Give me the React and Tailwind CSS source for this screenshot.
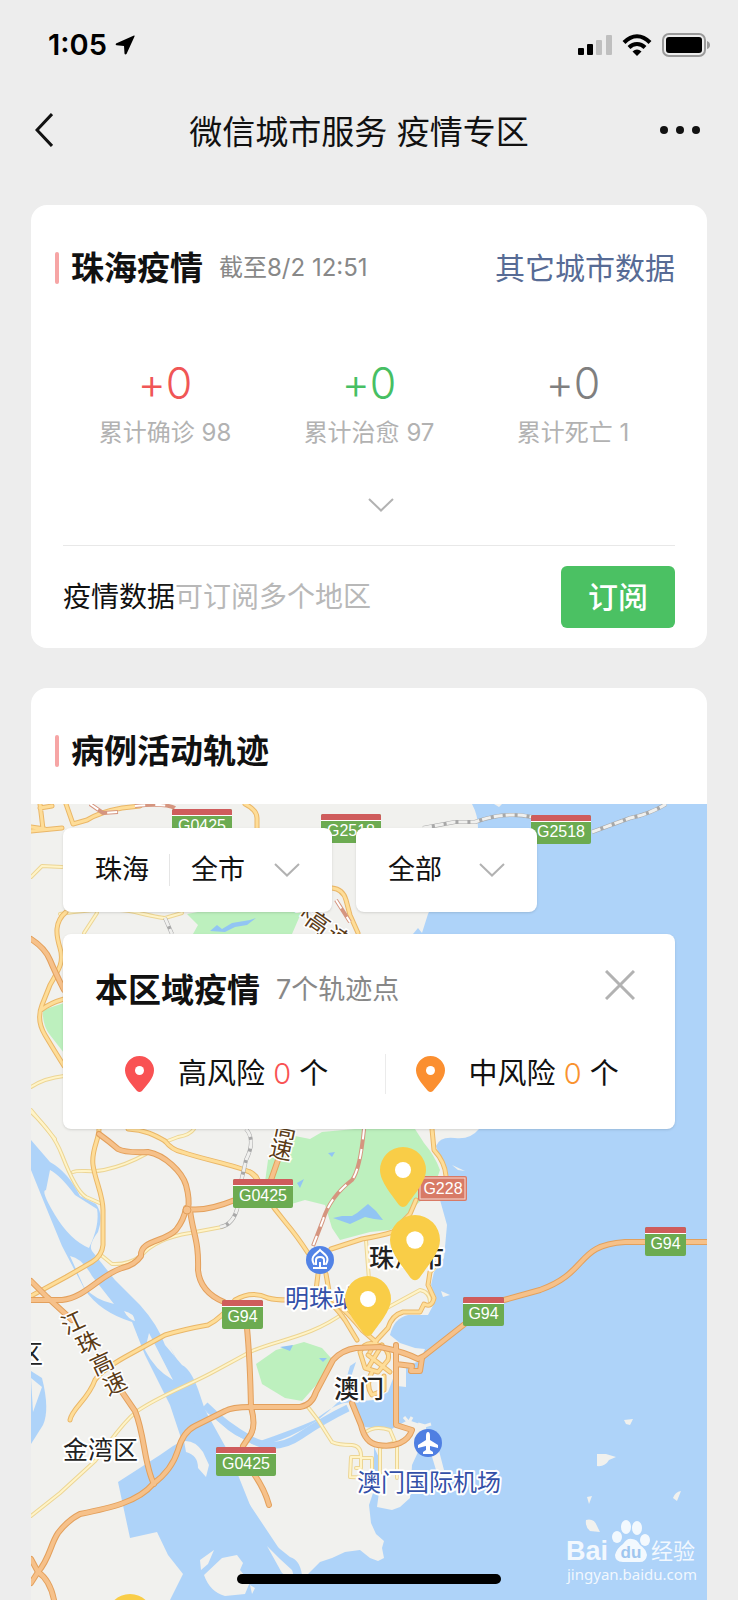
import React, { useState } from 'react'

const FONT = "font-['Inter','Noto_Sans_CJK_SC',sans-serif]"

const stats = [
    { label: '累计确诊', added: '+0', total: 98, color: 'text-[#f05656]' },
    { label: '累计治愈', added: '+0', total: 97, color: 'text-[#47bf63]' },
    { label: '累计死亡', added: '+0', total: 1, color: 'text-[#7f7f7f]' },
]

const risks = [
    { label: '高风险', count: 0, pin: '#f95253', color: 'text-[#f95253]' },
    { label: '中风险', count: 0, pin: '#fb8f30', color: 'text-[#f9922f]' },
]

const badges = [
    { x: 172, y: 809, w: 60, text: 'G0425' },
    { x: 321, y: 814, w: 60, text: 'G2518' },
    { x: 531, y: 815, w: 60, text: 'G2518' },
    { x: 233, y: 1179, w: 60, text: 'G0425' },
    { x: 222, y: 1300, w: 41, text: 'G94' },
    { x: 463, y: 1297, w: 41, text: 'G94' },
    { x: 645, y: 1227, w: 41, text: 'G94' },
    { x: 216, y: 1447, w: 60, text: 'G0425' },
]

// roads, from the smallest to the motorways
const lanes = [
    'M31 1112C45 1125 55 1137 62 1155S78 1192 86 1197L102 1204',
    'M73 1172C80 1169 90 1173 104 1170S130 1163 146 1154',
    'M165 1142L178 1137Q190 1135 194 1129',
    'M101 1255L112 1264Q128 1265 141 1256C150 1245 165 1237 190 1233L222 1227',
    'M31 1516L60 1493L95 1461C112 1440 120 1425 136 1412C160 1395 190 1385 215 1371L250 1352C275 1340 310 1338 345 1312',
    'M308 1407L318 1420L332 1442Q338 1445 352 1445Q362 1446 361 1458L372 1458V1478L350 1477L351 1457H361V1468H356',
    'M31 877L42 866L62 867',
    'M31 1087Q45 1078 64 1076',
    'M31 1110L55 1139',
    'M60 914Q110 906 135 912T165 918L182 913M97 913L84 933',
    'M366 1240L369 1280',
    'M385 1309L420 1290Q430 1292 430 1302',
    'M366 1432Q375 1425 390 1430L395 1442L382 1447M380 1447V1478M397 1445V1478',
]

const streets = [
    'M99 1129C99 1140 91 1150 93 1165S103 1195 103 1210V1245Q102 1256 92 1262L66 1277L31 1296',
    'M128 1129C145 1130 155 1135 165 1141Q172 1150 182 1152C205 1160 235 1165 247 1171Q255 1173 258 1180',
    'M70 1420C72 1408 88 1400 95 1380Q102 1370 125 1357L165 1335Q185 1329 208 1325Q222 1318 235 1300Q252 1290 268 1298Q275 1300 288 1300',
    'M250 1172Q258 1178 265 1195Q275 1210 286 1223T308 1253',
    'M331 1249L362 1239Q380 1236 393 1232Q402 1222 410 1214L416 1200',
    'M318 1274L316 1290Q335 1305 345 1320L357 1340',
    'M326 1274L330 1297Q350 1315 362 1330L376 1342',
    'M66 912C54 922 56 935 60 948S60 968 50 985L42 1005Q36 1020 45 1035T64 1066M41 1010Q50 1003 64 999',
    'M31 831L62 828M40 804L43 829M40 808L52 806M66 804L73 824L87 820Q100 812 122 808L140 806M45 829L31 827',
    'M245 804Q257 810 257 818V828',
    'M332 888Q343 889 346 900L350 915L358 933',
    'M432 1129L434 1150Q445 1162 446 1176',
    'M440 1260L430 1272L428 1285L434 1298Q432 1308 424 1304L420 1312L403 1312Q392 1315 388 1328L375 1342L370 1352',
    'M360 1352Q365 1340 378 1345T388 1360L378 1372L365 1368ZM372 1372Q365 1385 372 1395L384 1390V1376M368 1355L390 1372M382 1345L368 1368',
]

const highways = [
    'M31 1300H62C85 1298 100 1275 122 1268Q135 1265 141 1256C140 1240 165 1242 176 1230Q184 1220 186 1208',
    'M99 1134Q110 1142 118 1149Q125 1153 148 1152C165 1155 182 1172 186 1185Q190 1200 188 1209Q205 1212 235 1200',
    'M190 1210C193 1235 199 1240 198 1270Q200 1292 224 1302',
    'M31 1281L47 1297L72 1320M122 1392L135 1411C145 1435 144 1465 154 1484',
    'M38 1572C50 1558 50 1545 58 1533Q68 1520 80 1514C110 1508 138 1502 153 1484Q172 1470 178 1450Q183 1432 195 1426L225 1411Q232 1407 250 1407H300Q312 1405 316 1392L333 1360Q342 1350 356 1348L380 1347Q405 1352 418 1359L424 1356L466 1323',
    'M31 1559L38 1572L31 1583M38 1572Q50 1580 54 1600',
    'M247 1328Q250 1360 251 1407Q256 1425 251 1434L243 1446M254 1474Q265 1490 269 1505',
    'M504 1300L540 1290C590 1272 575 1245 625 1242H707',
    'M31 939Q45 948 50 960T64 990',
    'M352 1403L361 1425Q365 1443 378 1445T400 1443T412 1430L396 1425V1345M396 1364L412 1366L411 1371H420L422 1358',
    'M278 1160L271 1180',
]

const Road = ({ paths, edge, fill, width }) => (
    <g fill="none" strokeLinecap="round" strokeLinejoin="round">
        {paths.map((d) => <path key={d} d={d} stroke={edge} strokeWidth={width} />)}
        {paths.map((d) => <path key={d} d={d} stroke={fill} strokeWidth={width - 2} />)}
    </g>
)

const MapPin = ({ x, y, r }) => (
    <g transform={`translate(${x} ${y}) scale(${r / 23})`}>
        <path d="M-23 0A23 23 0 0 1 23 0C23 12 10 26 4 35Q0 39-4 35C-10 26-23 12-23 0Z" fill="#f9cd47" />
        <circle r="8" fill="#fff" />
    </g>
)

const CityMap = () => (
    <svg className="absolute inset-0 h-full w-full" viewBox="31 804 676 796" preserveAspectRatio="xMidYMin slice" role="img" aria-label="珠海地图">
        <rect x="31" y="804" width="676" height="796" fill="#f1f1ee" />
        {/* water */}
        <g fill="#aed3f9">
            <path d="M472 804Q478 815 478 828L440 890L428 914L422 933L418 928L413 934L420 1129H479Q470 1140 455 1138Q440 1136 436 1146Q440 1160 446 1172L440 1200L447 1225L444 1258L434 1272L431 1285L436 1300L428 1315H408Q394 1318 390 1335L400 1343L415 1348L425 1349L420 1361L406 1366V1387L397 1386L394 1376L388 1392L374 1400L352 1402L350 1380L356 1362L350 1366L346 1380L340 1400Q318 1424 290 1436T252 1444L200 1408L170 1347L178 1362L205 1410L228 1430Q245 1443 260 1441Q292 1430 315 1420Q340 1400 352 1403L365 1427L374 1445V1490L369 1505L371 1523L376 1534L384 1541L382 1548L384 1558L378 1561L370 1558L360 1550L345 1552L332 1558L320 1562L308 1574L302 1575Q300 1560 290 1557L270 1541Q258 1525 250 1505L242 1495L262 1600H707V804Z" />
            <path d="M31 1140L50 1162Q68 1172 80 1196L96 1204Q104 1215 98 1232Q88 1245 92 1251L115 1280L140 1305Q158 1325 165 1345L182 1365Q192 1370 200 1395L205 1410L230 1455L250 1505L280 1550L305 1600H170L183 1574L168 1555L157 1532L130 1538L118 1482L160 1455L173 1446L182 1441L170 1405L145 1355L132 1322Q100 1312 85 1290L62 1246Q45 1205 31 1170Z" />
            <path d="M31 1371L42 1378Q50 1410 43 1425L31 1444Z" />
            <path d="M137 1334L145 1350L162 1373L200 1420L186 1380L160 1340Z" />
        </g>
        <path d="M205 1405Q225 1425 250 1439T300 1436T348 1408" fill="none" stroke="#aed3f9" strokeWidth="7" />
        {/* islands */}
        <g fill="#f1f1ee">
            <path d="M50 1170Q60 1175 75 1195L97 1209Q100 1225 89 1248Q70 1240 55 1215T46 1190Z" />
            <path d="M70 1256Q82 1258 92 1276L114 1304Q95 1300 84 1287Z" />
            <path d="M124 1311Q134 1313 135 1321Q128 1319 124 1311ZM149 1333L173 1380Q155 1370 145 1350Z" />
            <path d="M31 1378L42 1387L33 1412Z" />
            <path d="M184 1441Q195 1440 203 1452L209 1465L206 1477L198 1468Q198 1455 186 1452Z" />
            <path d="M200 1560L214 1550L208 1564L201 1570ZM204 1575L222 1558L237 1555L243 1563L240 1570L250 1582L245 1594L225 1596Q210 1592 204 1575Z" />
            <path d="M267 1546L280 1559L292 1570L296 1583L282 1573Z" />
            <path d="M365 1427L390 1430L408 1420L426 1426V1440L418 1452L412 1465L410 1498L400 1507L392 1510L377 1507L380 1485V1460Z" />
            <path d="M430 1450L438 1447L444 1470H436ZM250 1585L255 1588L252 1594ZM452 1165L465 1171L458 1170ZM441 1291L450 1295L443 1297Z" />
            <path d="M624 1420L633 1419L630 1425L626 1424ZM597 1454L606 1454L616 1457L609 1460Q605 1467 597 1466ZM587 1497L592 1496L589 1504ZM586 1520Q594 1518 597 1526L600 1532L590 1531Q585 1527 586 1520ZM681 1491L677 1501L673 1498Q675 1492 681 1491ZM494 804L499 807L502 804Z" />
        </g>
        <path d="M404 1417L410 1424M412 1417L408 1424M418 1424L425 1426L431 1424" stroke="#f1f1ee" strokeWidth="3" fill="none" />
        {/* parks and hills */}
        <g fill="#bdf0be">
            <path d="M187 914L203 911H302L292 934H193L198 925Z" />
            <path d="M64 1003L43 1010Q42 1025 50 1035L64 1053Z" />
            <path d="M268 1160L290 1135L310 1139L322 1132L355 1129H415L424 1143Q435 1156 440 1170L433 1190L415 1206L405 1222L390 1230L370 1232L340 1240L332 1228L325 1205L305 1200L288 1205L265 1182Z" />
            <path d="M256 1364L276 1350L304 1342L322 1348L331 1358L325 1375L310 1392L302 1401L285 1398L262 1384Z" />
        </g>
        <g fill="#92c5f3">
            <path d="M210 931L217 925L222 929L232 923L250 920L256 918L247 925L235 927L225 932ZM333 1218L342 1216L352 1216L357 1213L368 1204L376 1211L383 1220L374 1219L365 1217L350 1224ZM297 1183L304 1179L300 1188ZM328 1153L335 1152L332 1157ZM280 1347L293 1345L290 1351ZM319 1358L327 1358L323 1362Z" />
        </g>
        <Road paths={lanes} edge="#ecd595" fill="#fff4c8" width={4} />
        <Road paths={streets} edge="#eab768" fill="#fedd98" width={5} />
        <Road paths={highways} edge="#e3a05c" fill="#f6c18a" width={6} />
        <circle cx="187" cy="1210" r="4" fill="#f6c18a" stroke="#e3a05c" />
        {/* railways */}
        <g fill="none">
            <g stroke="#a8a8a8" strokeWidth="4">
                <path d="M246 1129Q256 1140 246 1160L241 1182M238 1205Q234 1225 220 1227M165 918L172 934M423 828L455 822H475Q505 811 532 817M592 832L630 818Q650 814 666 804" />
            </g>
            <g stroke="#f0f0ee" strokeWidth="3" strokeDasharray="9 3">
                <path d="M246 1129Q256 1140 246 1160L241 1182M238 1205Q234 1225 220 1227M165 918L172 934M423 828L455 822H475Q505 811 532 817M592 832L630 818Q650 814 666 804" />
            </g>
            <path d="M364 1129Q360 1170 352 1180Q330 1197 323 1220L313 1246M90 804L103 813L118 812M135 806Q165 803 175 808M336 900L350 922" stroke="#d5957f" strokeWidth="4" />
            <path d="M364 1129Q360 1170 352 1180Q330 1197 323 1220L313 1246M90 804L103 813L118 812M135 806Q165 803 175 808M336 900L350 922" stroke="#fff" strokeWidth="2" strokeDasharray="10 10" />
        </g>
        {badges.map((badge) => (
            <g key={`${badge.x}-${badge.y}`}>
                <rect x={badge.x} y={badge.y} width={badge.w} height="29" rx="2" fill="#6cab51" />
                <path d={`M${badge.x} ${badge.y + 6}V${badge.y + 2}q0-2 2-2h${badge.w - 4}q2 0 2 2v4Z`} fill="#cf5c5c" />
                <rect x={badge.x} y={badge.y + 6} width={badge.w} height="1" fill="#fff" />
                <text x={badge.x + badge.w / 2} y={badge.y + 22} textAnchor="middle" fill="#fff" className="font-['Liberation_Sans',sans-serif] text-[16px]">{badge.text}</text>
            </g>
        ))}
        <rect x="418" y="1176" width="49" height="25" rx="2" fill="#d87a66" />
        <rect x="420" y="1178" width="45" height="21" fill="none" stroke="#f6dcd5" />
        <text x="443" y="1194" textAnchor="middle" fill="#fff" className="font-['Liberation_Sans',sans-serif] text-[16px]">G228</text>
        {/* road names */}
        <g fill="#5b3c17" stroke="#fff" strokeWidth="3" paintOrder="stroke" textAnchor="middle" className="text-[23px]">
            <text transform="translate(73 1323) rotate(-25)" y="8">江</text>
            <text transform="translate(88 1343) rotate(-25)" y="8">珠</text>
            <text transform="translate(102 1364) rotate(-25)" y="8">高</text>
            <text transform="translate(115 1384) rotate(-25)" y="8">速</text>
            <text transform="translate(286 1129) rotate(12)" y="8">高</text>
            <text transform="translate(281 1150) rotate(12)" y="8">速</text>
            <text transform="translate(304 906) rotate(35)" y="8">珠</text>
            <text transform="translate(318 923) rotate(35)" y="8">高</text>
            <text transform="translate(338 938) rotate(35)" y="8">速</text>
        </g>
        {/* place names */}
        <g fill="#222" stroke="#fff" strokeWidth="4" strokeLinejoin="round" paintOrder="stroke" className="text-[25px]">
            <text x="18" y="1363">区</text>
            <text x="63" y="1459">金湾区</text>
            <text x="334" y="1398" className="font-medium">澳门</text>
            <text x="369" y="1267" className="font-medium">珠海市</text>
        </g>
        <g fill="#3350a8" stroke="#fff" strokeWidth="4" strokeLinejoin="round" paintOrder="stroke">
            <text x="285" y="1307" className="text-[24px]">明珠站</text>
            <text x="357" y="1491" className="text-[24px]">澳门国际机场</text>
        </g>
        <circle cx="320" cy="1260" r="14" fill="#5283e6" />
        <path d="M314 1264C309 1256 318 1253 320 1250C322 1253 331 1256 326 1264" fill="none" stroke="#fff" strokeWidth="2" strokeLinecap="round" />
        <path d="M316 1265V1260Q316 1257 320 1257T324 1260V1265M320 1262V1267M313 1268H327" fill="none" stroke="#fff" strokeWidth="2" />
        <circle cx="428" cy="1443" r="14" fill="#4f7fe2" />
        <path d="M428 1432Q430 1432 430 1436V1440L438 1445V1448L430 1446V1450L433 1452V1454H423V1452L426 1450V1446L418 1448V1445L426 1440V1436Q426 1432 428 1432Z" fill="#fff" />
        <MapPin x={403} y={1170} r={23} />
        <MapPin x={415} y={1240} r={25} />
        <MapPin x={368} y={1299} r={23} />
        <MapPin x={130} y={1617} r={23} />
        {/* watermark */}
        <g fill="#fff" fillOpacity="0.85">
            <text x="566" y="1560" className="font-['Liberation_Sans',sans-serif] text-[27px] font-bold">Bai</text>
            <ellipse cx="617" cy="1537" rx="5" ry="6" />
            <ellipse cx="626" cy="1527" rx="5" ry="7" />
            <ellipse cx="637" cy="1528" rx="5" ry="7" />
            <ellipse cx="645" cy="1540" rx="5" ry="6" />
            <path d="M615 1555Q617 1548 623 1544Q627 1538 632 1539Q637 1539 640 1545Q646 1549 647 1555Q646 1563 638 1562H623Q615 1562 615 1555Z" />
            <text x="651" y="1559" className="text-[22px]">经验</text>
            <text x="567" y="1580" className="font-['Noto_Sans',sans-serif] text-[15px]">jingyan.baidu.com</text>
        </g>
        <text x="631" y="1558" textAnchor="middle" fill="#9fc6ef" className="font-['Liberation_Sans',sans-serif] text-[17px] font-bold">du</text>
    </svg>
)

const ChevronDown = () => (
    <svg className="pointer-events-none h-[14px] w-[26px]" viewBox="0 0 26 14" fill="none" stroke="#b2b2b2" strokeWidth="2">
        <path d="M1 1L13 12.500L25 1" />
    </svg>
)

const Heading = ({ children }) => (
    <h2 className="text-[33px] leading-8 font-bold text-[#111]">{children}</h2>
)

const StatusBar = () => (
    <div className="flex h-[90px] items-center justify-between pr-7 pl-12 text-black">
        <div className="flex items-center gap-2">
            <span className="text-[29px] leading-8 font-semibold">1:05</span>
            <svg className="h-5 w-5" viewBox="0 0 20 20"><path d="M19 0.500L1 8.500Q0 10 1.500 10.300L9 11L9.500 18.500Q10 20 11.500 19L19.500 1.500Q20 0.300 19 0.500Z" fill="currentColor" /></svg>
        </div>
        <div className="flex items-center gap-[10px]">
            <svg className="h-[22px] w-[34px]" viewBox="0 0 34 22">
                <rect x="0" y="14" width="6" height="7" rx="1" />
                <rect x="9" y="10" width="6" height="11" rx="1" />
                <rect x="18" y="6" width="6" height="15" rx="1" fill="#bfbfbf" />
                <rect x="28" y="1" width="6" height="20" rx="1" fill="#bfbfbf" />
            </svg>
            <svg className="h-[22px] w-[30px]" viewBox="0 0 30 22" fill="none" stroke="currentColor" strokeWidth="4">
                <path d="M2 8.500Q8 2.200 15 2.200T28 8.500M7 13.500Q10.500 10 15 10T23 13.500" />
                <path d="M10.500 17.500Q15 13.500 19.500 17.500L15 22Z" fill="currentColor" stroke="none" />
            </svg>
            <svg className="h-6 w-12" viewBox="0 0 48 24">
                <rect x="1" y="1" width="42" height="22" rx="6" fill="none" stroke="#9a9a9a" strokeWidth="2" />
                <rect x="4" y="4" width="36" height="16" rx="3" />
                <path d="M45 8Q48 9 48 12T45 16Z" fill="#9a9a9a" />
            </svg>
        </div>
    </div>
)

const App = () => {
    const [expanded, setExpanded] = useState(false)
    const [showPanel, setShowPanel] = useState(true)

    return (
        <div className={`flex min-h-screen flex-col bg-[#ededed] text-[#111] ${FONT}`}>
            <StatusBar />
            <header className="flex h-20 items-center px-[35px]">
                <button type="button" aria-label="返回" className="w-6">
                    <svg className="h-[34px] w-[18px]" viewBox="0 0 18 34" fill="none" stroke="currentColor" strokeWidth="3"><path d="M17 1L2 17L17 33" /></svg>
                </button>
                <h1 className="flex-1 pt-1 text-center text-[33px] leading-10">微信城市服务 疫情专区</h1>
                <button type="button" aria-label="更多">
                    <svg className="h-10 w-11" viewBox="0 0 44 40" fill="currentColor">
                        <circle cx="5" cy="20" r="4" />
                        <circle cx="21" cy="20" r="4" />
                        <circle cx="37" cy="20" r="4" />
                    </svg>
                </button>
            </header>

            <main className="flex flex-1 flex-col gap-10 px-[31px] pt-[35px]">
                <section className="rounded-2xl bg-white pt-[47px]">
                    <div className="flex items-center pr-8 pl-6">
                        <span className="mr-3 h-8 w-1 rounded-sm bg-[#f6a5a5]" />
                        <Heading>珠海疫情</Heading>
                        <span className="ml-4 text-[24px] leading-8 text-[#888]">截至8/2 12:51</span>
                        <a href="#cities" className="ml-auto text-[30px] leading-8 text-[#576b95]">其它城市数据</a>
                    </div>
                    <div className="mx-8 mt-[75px] grid grid-cols-3 text-center">
                        {stats.map((item) => (
                            <div key={item.label}>
                                <div className={`text-[43px] leading-[48px] font-light [font-feature-settings:'calt'_0] ${item.color}`}>{item.added}</div>
                                <div className="mt-[10px] text-[24px] leading-8 text-[#b2b2b2]">{item.label} {item.total}</div>
                            </div>
                        ))}
                    </div>
                    <div className="mt-11 flex justify-center pl-6">
                        <button type="button" aria-label="展开" aria-expanded={expanded} onClick={() => setExpanded(!expanded)} className="flex h-6 items-center">
                            <ChevronDown />
                        </button>
                    </div>
                    <div className="mx-8 mt-7 flex items-center justify-between border-t border-[#e8e8e8] py-5">
                        <p className="text-[28px] leading-8">疫情数据<span className="text-[#b8b8b8]">可订阅多个地区</span></p>
                        <button type="button" className="rounded-md bg-[#4bc163] px-[27px] py-[11px] text-[30px] leading-10 font-medium text-white">订阅</button>
                    </div>
                </section>

                <section className="flex flex-1 flex-col overflow-hidden rounded-t-2xl bg-white">
                    <div className="flex items-center pt-[47px] pr-8 pb-[37px] pl-6">
                        <span className="mr-3 h-8 w-1 rounded-sm bg-[#f6a5a5]" />
                        <Heading>病例活动轨迹</Heading>
                    </div>
                    <div className="relative flex-1 px-8 pt-6">
                        <CityMap />
                        <div className="relative flex gap-6 text-[27px] leading-10">
                            <label className="relative flex h-[84px] items-center rounded-lg bg-white pl-8 shadow-sm">
                                <span className="border-r border-[#e5e5e5] pr-5 leading-8">珠海</span>
                                <select className="h-full appearance-none bg-transparent pr-[87px] pl-[21px] outline-none">
                                    <option>全市</option>
                                </select>
                                <span className="pointer-events-none absolute right-8"><ChevronDown /></span>
                            </label>
                            <label className="relative flex h-[84px] items-center rounded-lg bg-white shadow-sm">
                                <select aria-label="风险等级" className="h-full appearance-none bg-transparent pr-[95px] pl-8 outline-none">
                                    <option>全部</option>
                                </select>
                                <span className="pointer-events-none absolute right-8"><ChevronDown /></span>
                            </label>
                        </div>

                        {showPanel && (
                            <div className="relative mt-[22px] rounded-lg bg-white pt-9 pb-[35px] shadow-sm">
                                <div className="flex items-center pr-10 pl-8">
                                    <Heading>本区域疫情</Heading>
                                    <span className="ml-4 text-[27px] leading-10 text-[#888]">7个轨迹点</span>
                                    <button type="button" aria-label="关闭" onClick={() => setShowPanel(false)} className="ml-auto self-start">
                                        <svg className="h-[30px] w-[30px]" viewBox="0 0 30 30" stroke="#b2b2b2" strokeWidth="3"><path d="M1 1L29 29M29 1L1 29" /></svg>
                                    </button>
                                </div>
                                <div className="mt-11 flex items-center pl-8">
                                    {risks.map((item) => (
                                        <div key={item.label} className="flex h-10 flex-1 items-center border-l border-[#ebebeb] pl-[30px] first:border-0">
                                            <svg className="h-9 w-[29px]" viewBox="0 0 29 36">
                                                <path d="M14.500 0A14.500 14.500 0 0 1 29 14.500C29 22 21 30 17 35Q14.500 37 12 35C8 30 0 22 0 14.500A14.500 14.500 0 0 1 14.500 0Z" fill={item.pin} />
                                                <circle cx="14.500" cy="14.500" r="4.500" fill="#fff" />
                                            </svg>
                                            <span className="ml-6 text-[29px] leading-10">{item.label} <span className={`font-light ${item.color}`}>{item.count}</span> 个</span>
                                        </div>
                                    ))}
                                </div>
                            </div>
                        )}
                    </div>
                </section>
            </main>

            <div className="fixed bottom-4 left-1/2 h-[10px] w-[264px] -translate-x-1/2 rounded-full bg-black" />
        </div>
    )
}

export default App
